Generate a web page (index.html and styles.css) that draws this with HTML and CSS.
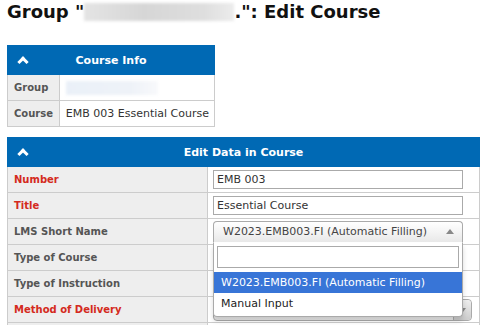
FILE: index.html
```html
<!DOCTYPE html>
<html lang="en">
<head>
    <meta charset="UTF-8">
    <title>Edit Course</title>
    <link rel="stylesheet" href="styles.css">
</head>
<body>
    <h1>Group "<span class="blurred"></span>.": Edit Course</h1>

    <table class="box info-box">
        <tr class="box-head">
            <th colspan="2">
                <div class="head-row">
                    <span class="caret"></span>
                    <span>Course Info</span>
                    <span></span>
                </div>
            </th>
        </tr>
        <tr>
            <td class="label">Group</td>
            <td class="value"><span class="blurred small"></span></td>
        </tr>
        <tr>
            <td class="label">Course</td>
            <td class="value">EMB 003 Essential Course</td>
        </tr>
    </table>

    <table class="box edit-box">
        <tr class="box-head">
            <th colspan="2">
                <div class="head-row">
                    <span class="caret"></span>
                    <span>Edit Data in Course</span>
                    <span></span>
                </div>
            </th>
        </tr>
        <tr>
            <td class="label required">Number</td>
            <td><input class="field" type="text" value="EMB 003"></td>
        </tr>
        <tr>
            <td class="label required">Title</td>
            <td><input class="field" type="text" value="Essential Course"></td>
        </tr>
        <tr>
            <td class="label">LMS Short Name</td>
            <td>
                <div class="chooser open">
                    <div class="chooser-box">
                        <span>W2023.EMB003.FI (Automatic Filling)</span>
                        <span class="arrow-up"></span>
                    </div>
                    <div class="chooser-drop">
                        <div class="chooser-search"><input type="text"></div>
                        <ul class="chooser-results">
                            <li class="highlighted">W2023.EMB003.FI (Automatic Filling)</li>
                            <li>Manual Input</li>
                        </ul>
                    </div>
                </div>
            </td>
        </tr>
        <tr>
            <td class="label">Type of Course</td>
            <td></td>
        </tr>
        <tr>
            <td class="label">Type of Instruction</td>
            <td></td>
        </tr>
        <tr>
            <td class="label required">Method of Delivery</td>
            <td>
                <div class="chooser wide">
                    <div class="chooser-box">
                        <span></span>
                        <span class="arrow-box"><span class="arrow-down"></span></span>
                    </div>
                </div>
            </td>
        </tr>
        <tr>
            <td class="label"></td>
            <td><input class="field" type="text" value=""></td>
        </tr>
    </table>
</body>
</html>
```

FILE: styles.css
```css
body {
    margin: 0;
    padding: 0 7px;
    font-family: "DejaVu Sans", Verdana, sans-serif;
    font-size: 11px;
    color: #333;
    background-color: #fff;
}
h1 {
    margin: 1px 0 0;
    font-size: 18px;
    line-height: 22px;
    color: #111;
}
.blurred {
    display: inline-block;
    width: 150px;
    height: 18px;
    vertical-align: -3px;
    background: linear-gradient(90deg, #e4e4e4, #d6d6d6 40%, #dedede 80%, #ececec);
    filter: blur(1.5px);
}
.blurred.small {
    width: 92px;
    height: 14px;
    vertical-align: middle;
    background: linear-gradient(90deg, #eaf0f8, #eef2f8 70%, #f8f9fb);
}
.box {
    border-collapse: collapse;
    margin-top: 22px;
}
.box td, .box th {
    border: 1px solid #ccc;
    height: 25px;
    padding: 0 5px;
    text-align: left;
    white-space: nowrap;
}
.box-head th {
    background-color: #0069b4;
    color: #fff;
    height: 28px;
    border-color: #0069b4;
    font-size: 11px;
    padding: 0;
}
.head-row {
    display: grid;
    grid-template-columns: 1fr auto 1fr;
    align-items: center;
}
.caret {
    justify-self: start;
    width: 5px;
    height: 5px;
    margin-left: 11px;
    margin-top: 3px;
    border-top: 3px solid #fff;
    border-left: 3px solid #fff;
    transform: rotate(45deg);
}
.label {
    background-color: #eee;
    color: #555;
    font-weight: bold;
    font-size: 10px;
}
.label.required {
    color: #d42a20;
}
.info-box {
    width: 208px;
}
.info-box .label {
    width: 40px;
    padding-left: 6px;
}
.info-box .value {
    padding-left: 6px;
}
.edit-box {
    width: 473px;
    margin-top: 10px;
}
.edit-box .label {
    width: 188px;
    padding-left: 6px;
}
.field {
    box-sizing: border-box;
    width: 250px;
    height: 19px;
    margin: 0;
    padding: 0 3px;
    border: 1px solid #aaa;
    font-family: inherit;
    font-size: 11px;
    color: #333;
    display: block;
}
.chooser {
    position: relative;
    width: 250px;
    height: 22px;
}
.chooser.wide {
    width: 259px;
}
.chooser-box {
    box-sizing: border-box;
    height: 22px;
    border: 1px solid #aaa;
    border-radius: 4px;
    background: linear-gradient(#fff, #f4f4f4 50%, #e8e8e8);
    display: flex;
    align-items: center;
    justify-content: space-between;
    padding: 0 8px 0 9px;
    color: #444;
}
.chooser.open .chooser-box {
    border-radius: 4px 4px 0 0;
    border-bottom-color: #fff;
}
.arrow-up {
    width: 0;
    height: 0;
    border-left: 4px solid transparent;
    border-right: 4px solid transparent;
    border-bottom: 5px solid #888;
}
.chooser.wide .chooser-box {
    padding-right: 0;
}
.arrow-box {
    align-self: stretch;
    width: 17px;
    border-left: 1px solid #aaa;
    border-radius: 0 4px 4px 0;
    background: linear-gradient(#eee, #ccc);
    display: flex;
    align-items: center;
    justify-content: center;
}
.arrow-down {
    width: 0;
    height: 0;
    border-left: 3px solid transparent;
    border-right: 3px solid transparent;
    border-top: 4px solid #888;
}
.chooser-drop {
    position: absolute;
    top: 22px;
    left: 0;
    right: 0;
    z-index: 2;
    box-sizing: border-box;
    background-color: #fff;
    border: 1px solid #aaa;
    border-top: 0;
    border-radius: 0 0 4px 4px;
    box-shadow: 0 4px 5px rgba(0, 0, 0, 0.15);
    padding: 3px 0 2px;
}
.chooser-search {
    padding: 0 3px;
}
.chooser-search input {
    box-sizing: border-box;
    width: 100%;
    height: 22px;
    margin: 0;
    border: 1px solid #aaa;
    display: block;
}
.chooser-results {
    list-style: none;
    margin: 4px 0 0;
    padding: 0;
}
.chooser-results li {
    height: 21px;
    line-height: 21px;
    padding: 0 7px;
    color: #222;
}
.chooser-results li.highlighted {
    background-color: #3875d7;
    color: #fff;
}
```
